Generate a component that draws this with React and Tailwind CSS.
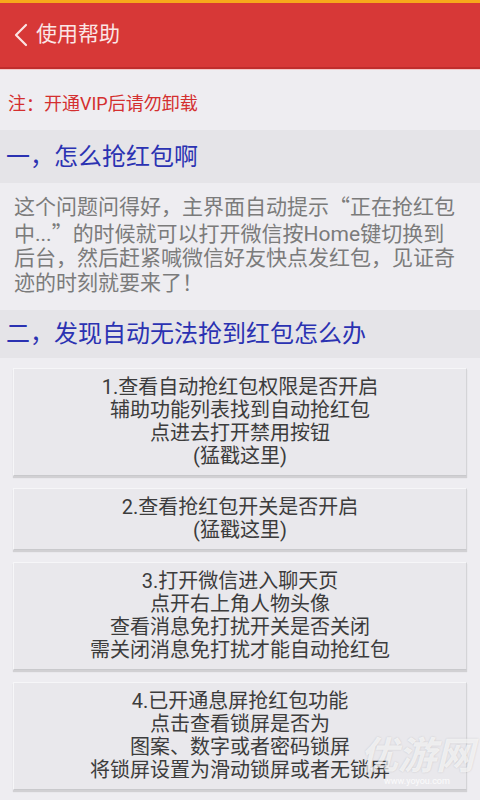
import React from "react";

const font = { fontFamily: 'Roboto, "Noto Sans CJK SC", sans-serif' };
const cjk = { fontFamily: '"Noto Sans CJK SC", sans-serif' };

function Btn({ lines }) {
  return (
    <div className="bg-[#e9e8ec] border border-[#f6f6f8] border-b-[#c9c9cc] border-r-[#d4d4d7] shadow-[0_2px_1px_rgba(0,0,0,0.12)] py-[7px] text-center text-[20px] leading-[23px] text-[#3c3c3c]">
      {lines.map((l, i) => (
        <div key={i}>{l}</div>
      ))}
    </div>
  );
}

export default function App() {
  return (
    <div className="relative w-[480px] h-[800px] overflow-hidden bg-[#eeedf1]" style={font}>
      <div className="h-[3px] bg-[#f7a81b]" />
      <div className="h-[66px] bg-[#d73837] border-b-2 border-[#c02d2c] flex items-center">
        <svg width="18" height="26" viewBox="0 0 18 26" className="ml-[12px]">
          <path d="M14 3 L4 13 L14 23" fill="none" stroke="#fbe3e3" strokeWidth="2.2" strokeLinecap="round" strokeLinejoin="round" />
        </svg>
        <span className="ml-[6px] text-[21px] text-[#fbe6e6]">使用帮助</span>
      </div>
      <div className="h-[1px] bg-[#f3c8c8]" />
      <div className="h-[60px] flex items-center pt-[6px] pl-[8px] text-[18px] text-[#d42f2f]">
        注<span style={cjk}>：</span>开通VIP后请勿卸载
      </div>
      <div className="h-[53px] bg-[#e5e4e8] flex items-center pl-[6px] text-[24px] text-[#2b32b2]">
        一，怎么抢红包啊
      </div>
      <div className="pt-[10px] pb-[15px] px-[14px] text-[21px] leading-[24.5px] text-[#7b7b7b]">
        <div>这个问题问得好，主界面自动提示<span style={cjk}>“</span>正在抢红包</div>
        <div>中...<span style={cjk}>”</span>的时候就可以打开微信按Home键切换到</div>
        <div>后台，然后赶紧喊微信好友快点发红包，见证奇</div>
        <div>迹的时刻就要来了！</div>
      </div>
      <div className="h-[48px] bg-[#e5e4e8] flex items-center pl-[6px] text-[24px] text-[#2b32b2]">
        二，发现自动无法抢到红包怎么办
      </div>
      <div className="mx-[13px] mt-[10px] flex flex-col gap-[12px]">
        <Btn lines={["1.查看自动抢红包权限是否开启", "辅助功能列表找到自动抢红包", "点进去打开禁用按钮", "(猛戳这里)"]} />
        <Btn lines={["2.查看抢红包开关是否开启", "(猛戳这里)"]} />
        <Btn lines={["3.打开微信进入聊天页", "点开右上角人物头像", "查看消息免打扰开关是否关闭", "需关闭消息免打扰才能自动抢红包"]} />
        <Btn lines={["4.已开通息屏抢红包功能", "点击查看锁屏是否为", "图案、数字或者密码锁屏", "将锁屏设置为滑动锁屏或者无锁屏"]} />
      </div>
      <div className="absolute right-[6px] bottom-[14px] flex flex-col items-center">
        <span className="text-[38px] leading-[40px] font-bold italic text-white/70 [text-shadow:0_0_2px_rgba(0,0,0,0.15)]">优游网</span>
        <span className="text-[9px] leading-[10px] text-white/80">www.yoyou.com</span>
      </div>
    </div>
  );
}
